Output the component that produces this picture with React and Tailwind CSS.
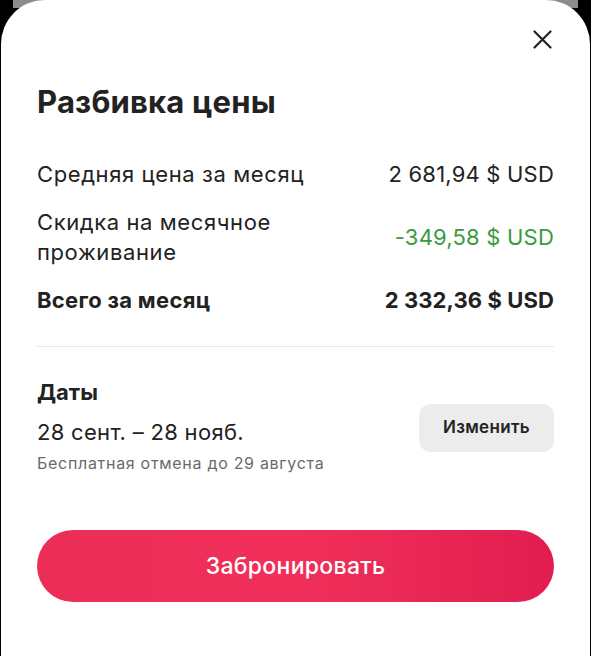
const rows = [
  { label: ["Средняя цена за месяц"], value: "2 681,94 $ USD" },
  { label: ["Скидка на месячное", "проживание"], value: "-349,58 $ USD", green: true },
];

export default function App() {
  return (
    <div
      className="h-[656px] w-[591px] overflow-hidden bg-black"
      style={{ fontFamily: "Inter, 'Noto Sans', sans-serif" }}
    >
      <div className="mx-[13px] h-[8px] bg-[#8c8c8c]" />
      <div className="relative -mt-[8px] ml-[1px] mr-[1px] h-[664px] rounded-t-[44px] bg-white pl-[36px] pr-[36px] pt-[30px] text-[#222222]">
        <div className="flex justify-end pr-[2px]">
          <svg width="19" height="19" viewBox="0 0 19 19" fill="none" stroke="currentColor" strokeWidth="2.2" strokeLinecap="round">
            <path d="M1.5 1.5 17.5 17.5M17.5 1.5 1.5 17.5" />
          </svg>
        </div>

        <h1 className="mt-[34px] text-[31px] leading-[38px] font-bold tracking-[0.2px]">
          Разбивка цены
        </h1>

        <div className="mt-[38px] flex flex-col gap-[18px]">
          {rows.map((r) => (
            <div key={r.value} className="flex items-center justify-between gap-6">
              <span className="flex flex-col text-[22px] leading-[30px] tracking-[0.6px]">
                {r.label.map((l) => (
                  <span key={l}>{l}</span>
                ))}
              </span>
              <span
                className={`text-[22px] leading-[30px] tracking-[0.2px] ${r.green ? "text-[#3b9a40]" : ""}`}
              >
                {r.value}
              </span>
            </div>
          ))}
          <div className="flex items-center justify-between">
            <span className="text-[22px] leading-[30px] font-bold tracking-[0.3px]">Всего за месяц</span>
            <span className="text-[22px] leading-[30px] font-bold tracking-[0.1px]">2 332,36 $ USD</span>
          </div>
        </div>

        <div className="mt-[31px] h-px bg-[#e8e8e8]" />

        <div className="mt-[30px] flex items-center justify-between">
          <div>
            <div className="text-[22px] leading-[30px] font-bold">Даты</div>
            <div className="mt-[10px] text-[22px] leading-[30px] tracking-[0.3px]">28 сент. – 28 нояб.</div>
            <div className="mt-[4px] text-[16px] leading-[24px] tracking-[0.7px] text-[#6a6a6a]">
              Бесплатная отмена до 29 августа
            </div>
          </div>
          <button className="mt-[4px] h-[48px] w-[135px] rounded-[12px] bg-[#ececec] text-[17px] font-semibold tracking-[0.3px]">
            Изменить
          </button>
        </div>

        <button className="mt-[55px] h-[72px] w-full rounded-full bg-gradient-to-r from-[#ec2d57] via-[#f0305a] to-[#e11d50] text-[23px] font-medium tracking-[0.3px] text-white">
          Забронировать
        </button>
      </div>
    </div>
  );
}
